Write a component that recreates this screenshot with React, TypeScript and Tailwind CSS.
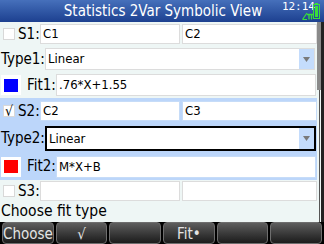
const font = { fontFamily: '"DejaVu Sans Condensed", "DejaVu Sans", sans-serif' };

function Check({ checked }: { checked?: boolean }) {
  return (
    <div className="flex h-[12px] w-[12px] shrink-0 items-center justify-center border border-[#d8d8d8] bg-white text-[14px] leading-none text-black">
      {checked ? '√' : ''}
    </div>
  );
}

function Field({ text, className = '' }: { text: string; className?: string }) {
  return (
    <div className={`flex h-[20px] items-center bg-white px-[2px] text-[13px] text-black ${className}`}>
      {text}
    </div>
  );
}

function Swatch({ color }: { color: string }) {
  return (
    <div className="flex h-[20px] w-[20px] shrink-0 items-center justify-center bg-white">
      <div className={`h-[13px] w-[14px] ${color}`} />
    </div>
  );
}

function Arrow() {
  return (
    <div className="flex h-full w-[15px] items-center justify-center bg-[#c4dcfc]">
      <svg width="7" height="5" viewBox="0 0 7 5">
        <path d="M0 0h7L3.5 5z" fill="#7a7a7a" />
      </svg>
    </div>
  );
}

function SRow({ n, a, b, checked, hl }: { n: number; a: string; b: string; checked?: boolean; hl?: boolean }) {
  const border = hl ? 'border border-[#c6dcf8]' : 'border border-[#dcdcdc]';
  return (
    <div className="flex h-full items-center">
      <div className="ml-[3px] mr-[3px]">
        <Check checked={checked} />
      </div>
      <span className="w-[20px] text-[15px] leading-none text-black">S{n}:</span>
      <Field text={a} className={`ml-[2px] w-[140px] ${border}`} />
      <Field text={b} className={`ml-[2px] w-[135px] ${border}`} />
    </div>
  );
}

function TypeRow({ n, active }: { n: number; active?: boolean }) {
  return (
    <div className="flex h-full items-center">
      <span className="ml-[1px] w-[44px] text-[15px] leading-none text-black">Type{n}:</span>
      <div
        className={`flex items-stretch bg-white ${active ? 'h-[25px] w-[271px] border-2 border-black' : 'h-[22px] w-[270px] border border-[#dcdcdc]'}`}
      >
        <div className="flex flex-1 items-center pl-[2px] text-[13px] text-black">Linear</div>
        <Arrow />
      </div>
    </div>
  );
}

function FitRow({ n, color, expr, hl }: { n: number; color: string; expr: string; hl?: boolean }) {
  return (
    <div className="flex h-full items-center">
      <div className="ml-[1px] mr-[6px]">
        <Swatch color={color} />
      </div>
      <span className="w-[29px] text-[15px] leading-none text-black">Fit{n}:</span>
      <Field
        text={expr}
        className={`h-[22px] w-[260px] ${hl ? 'border border-[#c6dcf8]' : 'border border-[#dcdcdc]'}`}
      />
    </div>
  );
}

const menu = ['Choose', '√', '', 'Fit•', '', ''];

export default function App() {
  return (
    <div className="flex h-[244px] w-[324px] flex-col overflow-hidden bg-black" style={font}>
      <div className="relative flex h-[22px] shrink-0 items-center justify-center bg-gradient-to-b from-[#4670bb] to-[#1d4090] text-[15px] text-white">
        <span className="ml-[2px]">Statistics 2Var Symbolic View</span>
        <span className="absolute right-[9px] top-[1px] font-['DejaVu_Sans_Mono'] text-[11px] leading-[11px] text-white">12:14</span>
        <svg className="absolute right-[11px] top-[12px]" width="11" height="8" viewBox="0 0 11 8">
          <path d="M0.5 7.5L5 1M0.5 7.5H5" stroke="#39e039" strokeWidth="1.2" fill="none" />
          <path d="M5 2.5h6M7 2.5v5M9.5 2.5v5" stroke="#39e039" strokeWidth="1.3" fill="none" />
        </svg>
        <div className="absolute right-[4px] top-[3px] flex h-[16px] w-[7px] flex-col items-center">
          <div className="h-[1px] w-[3px] bg-[#39e039]" />
          <div className="flex-1 w-full border border-[#39e039] p-[1px]">
            <div className="h-full w-full bg-[#39e039]" />
          </div>
        </div>
      </div>
      <div className="flex h-[200px] shrink-0">
        <div className="flex w-[317px] flex-col bg-[#eef6f5]">
          <div className="h-[24px]">
            <SRow n={1} a="C1" b="C2" />
          </div>
          <div className="h-[26px]">
            <TypeRow n={1} />
          </div>
          <div className="h-[26px]">
            <FitRow n={1} color="bg-[#0000ff]" expr=".76*X+1.55" />
          </div>
          <div className="flex flex-col bg-[#bcd6fa]">
            <div className="h-[26px]">
              <SRow n={2} a="C2" b="C3" checked hl />
            </div>
            <div className="h-[29px]">
              <TypeRow n={2} active />
            </div>
            <div className="h-[27px]">
              <FitRow n={2} color="bg-[#ff0000]" expr="M*X+B" hl />
            </div>
          </div>
          <div className="h-[22px]">
            <SRow n={3} a="" b="" />
          </div>
          <div className="flex h-[20px] items-center pl-[1px] text-[15.5px] leading-none text-black">
            Choose fit type
          </div>
        </div>
        <div className="flex w-[7px] bg-[#eef6f5]">
          <div className="relative w-[4px]">
            <div className="absolute left-[2px] top-0 h-full w-[1px] bg-[#555]" />
            <div className="absolute left-0 top-0 h-[68px] w-[4px] bg-[#8a8a8a]" />
          </div>
          <div className="w-[3px] bg-[#222]" />
        </div>
      </div>
      <div className="flex h-[22px] shrink-0 gap-[2px] bg-black px-[2px]">
        {menu.map((m, i) => (
          <div
            key={i}
            className="flex flex-1 items-center justify-center rounded-[4px] border border-[#6e6e6e] bg-gradient-to-b from-[#5e5e5e] to-[#1c1c1c] pt-[2px] text-[15px] leading-none text-[#e4e4e4]"
          >
            {m}
          </div>
        ))}
      </div>
    </div>
  );
}
